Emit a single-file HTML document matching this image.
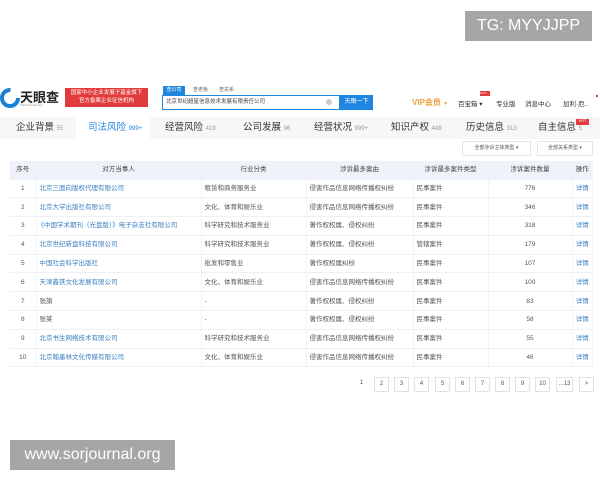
<!DOCTYPE html>
<html><head><meta charset="utf-8"><style>
*{margin:0;padding:0;box-sizing:border-box}
body{width:600px;height:480px;background:#fff;position:relative;overflow:hidden;font-family:"Liberation Sans","Noto Sans CJK SC",sans-serif;color:#333}
.a{position:absolute;white-space:nowrap}
.s{font-size:7px}
.tab{position:absolute;top:117px;height:22px;line-height:22px;font-size:9.5px;color:#333}
.tab i{font-style:normal;font-size:6px;color:#999}
table{position:absolute;left:10px;top:161px;width:583px;border-collapse:collapse;font-size:6.5px;color:#555}
td,th{height:18.8px;line-height:10px;padding-top:1px;font-weight:normal;border-bottom:1px solid #eef0f4;border-right:1px solid #f2f3f6;vertical-align:middle}
th{background:#eef3fa;height:18px;color:#444}
td.l{color:#3a7fc0}
.pg{position:absolute;top:377px;width:15px;height:15px;border:1px solid #e2e2e2;font-size:6px;text-align:center;line-height:13px;color:#555}
</style></head><body>
<div class="a" style="left:465px;top:11px;width:127px;height:30px;background:#a6a6a6;color:#fff;font-size:16px;line-height:30px;text-align:center">TG: MYYJJPP</div>
<svg class="a" style="left:0;top:88px" width="20" height="20" viewBox="0 0 20 20"><circle cx="10" cy="10" r="8" fill="none" stroke="#1a82d6" stroke-width="4" stroke-dasharray="38 12"/></svg>
<div class="a" style="left:20px;top:87px;font-size:13px;color:#222;font-weight:bold">天眼查</div>
<div class="a" style="left:20px;top:103px;font-size:3px;color:#888">TianYanCha.com</div>
<div class="a" style="left:65px;top:88px;width:83px;height:19px;background:#e23b3b;color:#fff;font-size:5.5px;line-height:8px;text-align:center;padding-top:1px">国家中小企业发展子基金旗下<br>官方备案企业征信机构</div>
<div class="a s" style="left:163px;top:86px;width:22px;height:9px;background:#1f86e0;color:#fff;font-size:5px;line-height:9px;text-align:center">查公司</div>
<div class="a" style="left:193px;top:86px;font-size:5px;color:#666">查老板</div>
<div class="a" style="left:219px;top:86px;font-size:5px;color:#666">查关系</div>
<div class="a" style="left:162px;top:95px;width:178px;height:15px;border:1px solid #1f86e0;font-size:5.5px;line-height:13px;padding-left:3px;color:#444">北京世纪超星信息技术发展有限责任公司</div>
<div class="a" style="left:326px;top:99px;width:6px;height:6px;border-radius:50%;background:#ccc"></div>
<div class="a" style="left:340px;top:95px;width:33px;height:15px;background:#1f86e0;color:#fff;font-size:6px;line-height:15px;text-align:center">天眼一下</div>
<div class="a" style="left:412px;top:97px;font-size:8px;color:#e8a33a;font-weight:bold">VIP会员 <span style="font-size:5px">▼</span></div>
<div class="a" style="left:458px;top:98px;font-size:6.5px">百宝箱 ▾</div>
<div class="a" style="left:480px;top:91px;width:10px;height:5px;background:#e23b3b;font-size:3px;color:#fff">HOT</div>
<div class="a" style="left:496px;top:98px;font-size:6.5px">专业版</div>
<div class="a" style="left:525px;top:98px;font-size:6.5px">消息中心</div>
<div class="a" style="left:563px;top:98px;font-size:6.5px">加利·厄..</div>
<div class="a" style="left:596px;top:95px;width:2px;height:2px;background:#e23b3b"></div>
<div class="a" style="left:0;top:117px;width:600px;height:22px;background:#f6f7f9"></div>
<div class="a" style="left:76px;top:117px;width:74px;height:22px;background:#fff"></div>
<div class="tab" style="left:16px">企业背景 <i>55</i></div>
<div class="tab" style="left:88px;color:#1f86e0">司法风险 <i style="color:#1f86e0">999+</i></div>
<div class="tab" style="left:165px">经营风险 <i>419</i></div>
<div class="tab" style="left:243px">公司发展 <i>96</i></div>
<div class="tab" style="left:314px">经营状况 <i>999+</i></div>
<div class="tab" style="left:391px">知识产权 <i>449</i></div>
<div class="tab" style="left:466px">历史信息 <i>313</i></div>
<div class="tab" style="left:538px">自主信息 <i>5</i></div>
<div class="a" style="left:576px;top:119px;width:13px;height:6px;background:#e23b3b;font-size:3.5px;color:#fff;text-align:center">HOT</div>
<div class="a" style="left:462px;top:141px;width:69px;height:15px;border:1px solid #e5e5e5;font-size:5px;line-height:13px;text-align:center;color:#555">全部涉诉主体类型 ▾</div>
<div class="a" style="left:537px;top:141px;width:56px;height:15px;border:1px solid #e5e5e5;font-size:5px;line-height:13px;text-align:center;color:#555">全部关系类型 ▾</div>
<table>
<tr><th style="width:26px">序号</th><th style="width:165px">对方当事人</th><th style="width:105px">行业分类</th><th style="width:107px">涉诉最多案由</th><th style="width:75px">涉诉最多案件类型</th><th style="width:84px">涉诉案件数量</th><th>操作</th></tr>
<tr><td align=center>1</td><td class=l style="padding-left:3px">北京三面向版权代理有限公司</td><td style="padding-left:3px">租赁和商务服务业</td><td style="padding-left:3px">侵害作品信息网络传播权纠纷</td><td style="padding-left:3px">民事案件</td><td align=center>776</td><td align=center style="color:#3a7fc0">详情</td></tr>
<tr><td align=center>2</td><td class=l style="padding-left:3px">北京大学出版社有限公司</td><td style="padding-left:3px">文化、体育和娱乐业</td><td style="padding-left:3px">侵害作品信息网络传播权纠纷</td><td style="padding-left:3px">民事案件</td><td align=center>346</td><td align=center style="color:#3a7fc0">详情</td></tr>
<tr><td align=center>3</td><td class=l style="padding-left:1px">《中国学术期刊（光盘版）》电子杂志社有限公司</td><td style="padding-left:3px">科学研究和技术服务业</td><td style="padding-left:3px">著作权权属、侵权纠纷</td><td style="padding-left:3px">民事案件</td><td align=center>318</td><td align=center style="color:#3a7fc0">详情</td></tr>
<tr><td align=center>4</td><td class=l style="padding-left:3px">北京世纪新盘科技有限公司</td><td style="padding-left:3px">科学研究和技术服务业</td><td style="padding-left:3px">著作权权属、侵权纠纷</td><td style="padding-left:3px">管辖案件</td><td align=center>179</td><td align=center style="color:#3a7fc0">详情</td></tr>
<tr><td align=center>5</td><td class=l style="padding-left:3px">中国社会科学出版社</td><td style="padding-left:3px">批发和零售业</td><td style="padding-left:3px">著作权权属纠纷</td><td style="padding-left:3px">民事案件</td><td align=center>107</td><td align=center style="color:#3a7fc0">详情</td></tr>
<tr><td align=center>6</td><td class=l style="padding-left:3px">天津鑫铁文化发展有限公司</td><td style="padding-left:3px">文化、体育和娱乐业</td><td style="padding-left:3px">侵害作品信息网络传播权纠纷</td><td style="padding-left:3px">民事案件</td><td align=center>100</td><td align=center style="color:#3a7fc0">详情</td></tr>
<tr><td align=center>7</td><td style="padding-left:3px">张旗</td><td style="padding-left:3px">-</td><td style="padding-left:3px">著作权权属、侵权纠纷</td><td style="padding-left:3px">民事案件</td><td align=center>83</td><td align=center style="color:#3a7fc0">详情</td></tr>
<tr><td align=center>8</td><td style="padding-left:3px">张某</td><td style="padding-left:3px">-</td><td style="padding-left:3px">著作权权属、侵权纠纷</td><td style="padding-left:3px">民事案件</td><td align=center>58</td><td align=center style="color:#3a7fc0">详情</td></tr>
<tr><td align=center>9</td><td class=l style="padding-left:3px">北京书生网络技术有限公司</td><td style="padding-left:3px">科学研究和技术服务业</td><td style="padding-left:3px">侵害作品信息网络传播权纠纷</td><td style="padding-left:3px">民事案件</td><td align=center>55</td><td align=center style="color:#3a7fc0">详情</td></tr>
<tr><td align=center>10</td><td class=l style="padding-left:3px">北京翰墨林文化传媒有限公司</td><td style="padding-left:3px">文化、体育和娱乐业</td><td style="padding-left:3px">侵害作品信息网络传播权纠纷</td><td style="padding-left:3px">民事案件</td><td align=center>46</td><td align=center style="color:#3a7fc0">详情</td></tr>
</table>
<div class="pg" style="left:354px;border:none">1</div>
<div class="pg" style="left:374px">2</div>
<div class="pg" style="left:394px">3</div>
<div class="pg" style="left:414px">4</div>
<div class="pg" style="left:435px">5</div>
<div class="pg" style="left:455px">6</div>
<div class="pg" style="left:475px">7</div>
<div class="pg" style="left:495px">8</div>
<div class="pg" style="left:515px">9</div>
<div class="pg" style="left:535px">10</div>
<div class="pg" style="left:556px;width:17px">...13</div>
<div class="pg" style="left:579px">&gt;</div>
<div class="a" style="left:10px;top:440px;width:165px;height:30px;background:#a6a6a6;color:#fff;font-size:16px;line-height:30px;text-align:center">www.sorjournal.org</div>
</body></html>
